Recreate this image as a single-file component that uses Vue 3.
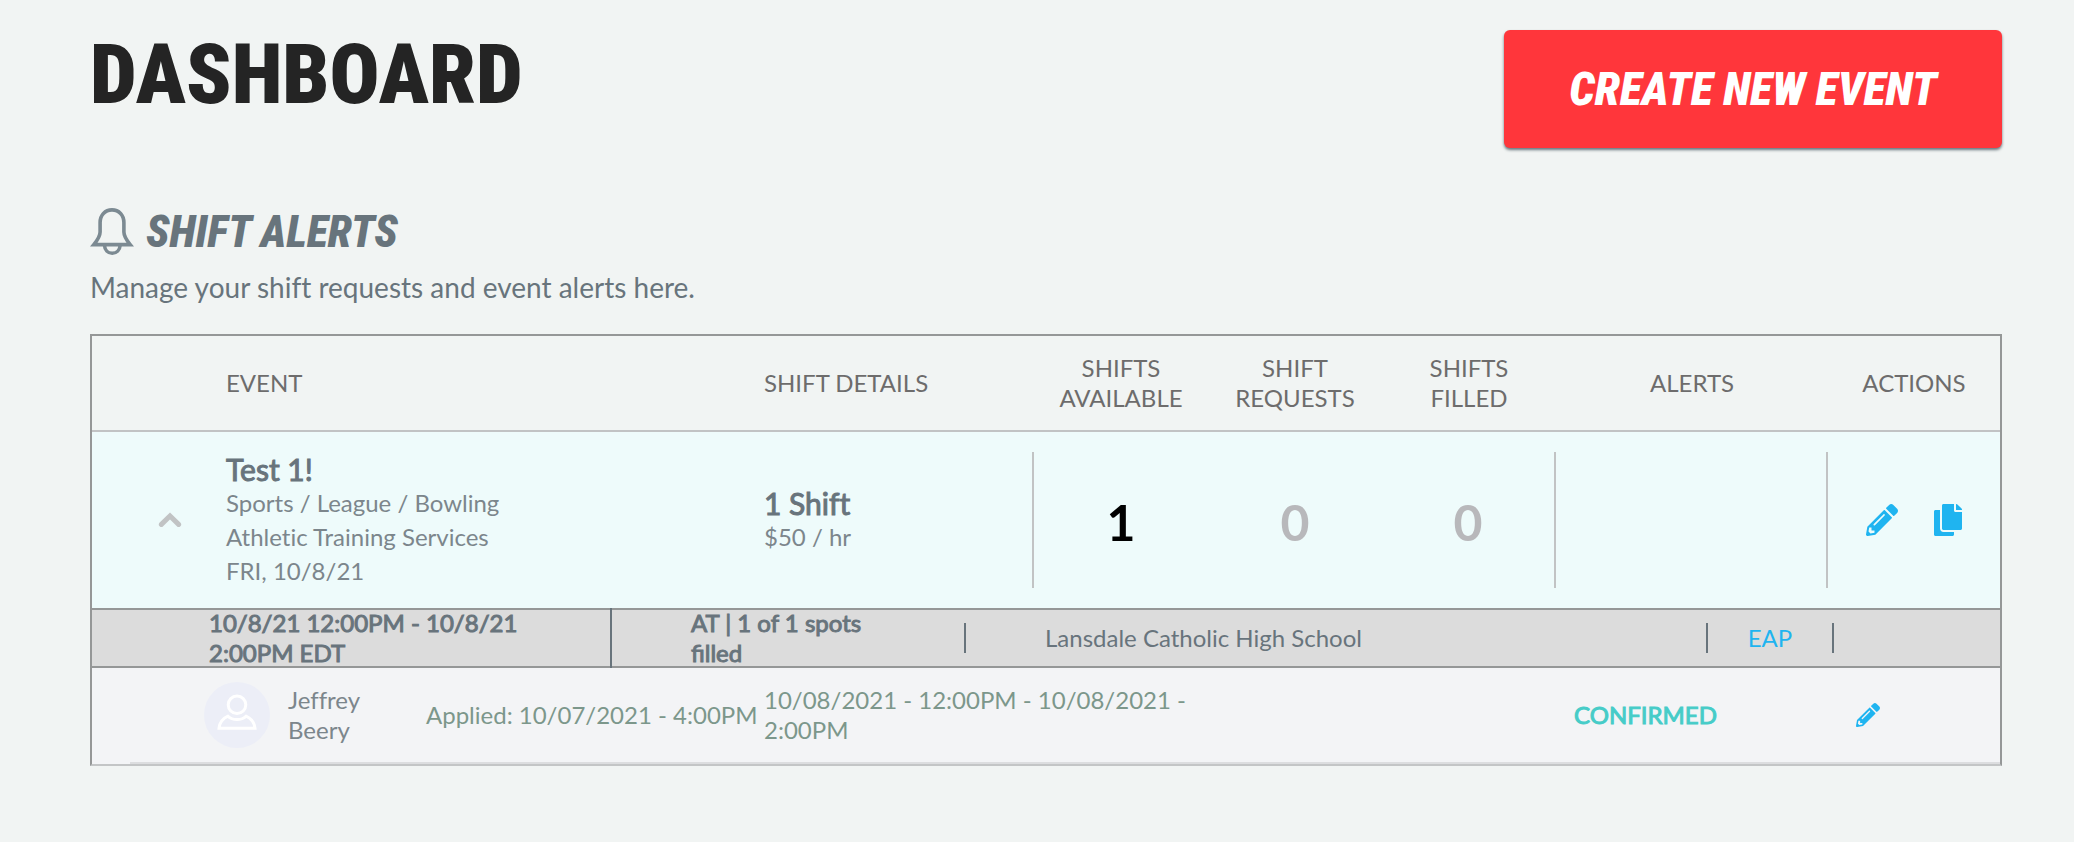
<script setup>
const columns = [
  { label: 'EVENT', align: 'left' },
  { label: 'SHIFT DETAILS', align: 'left' },
  { label: 'SHIFTS AVAILABLE' },
  { label: 'SHIFT REQUESTS' },
  { label: 'SHIFTS FILLED' },
  { label: 'ALERTS' },
  { label: 'ACTIONS' },
]

const event = {
  name: 'Test 1!',
  category: 'Sports / League / Bowling',
  service: 'Athletic Training Services',
  date: 'FRI, 10/8/21',
  shifts: '1 Shift',
  rate: '$50 / hr',
  counts: [1, 0, 0],
}

const shift = {
  time: '10/8/21 12:00PM - 10/8/21 2:00PM EDT',
  spots: 'AT | 1 of 1 spots filled',
  venue: 'Lansdale Catholic High School',
}

const applicants = [
  {
    name: 'Jeffrey Beery',
    applied: 'Applied: 10/07/2021 - 4:00PM',
    range: '10/08/2021 - 12:00PM - 10/08/2021\u00a0- 2:00PM',
    status: 'CONFIRMED',
  },
]

const pencil =
  'M497.9 142.1l-46.1 46.1c-4.7 4.7-12.3 4.7-17 0l-111-111c-4.7-4.7-4.7-12.3 0-17l46.1-46.1c18.7-18.7 49.1-18.7 67.9 0l60.1 60.1c18.8 18.7 18.8 49.1 0 67.9zM284.2 99.8L21.6 362.4.4 483.9c-2.9 16.4 11.4 30.6 27.8 27.8l121.5-21.3 262.6-262.6c4.7-4.7 4.7-12.3 0-17l-111-111c-4.8-4.7-12.4-4.7-17.1 0zM124.1 339.9c-5.5-5.5-5.5-14.3 0-19.8l154-154c5.5-5.5 14.3-5.5 19.8 0s5.5 14.3 0 19.8l-154 154c-5.5 5.5-14.3 5.5-19.8 0zM88 424h48v36.3l-64.5 11.3-31.1-31.1L51.7 376H88v48z'
</script>

<template>
  <main class="page">
    <header class="page-header">
      <h1 class="title">DASHBOARD</h1>
      <button type="button" class="create">CREATE NEW EVENT</button>
    </header>

    <section>
      <div class="section-head">
        <svg class="bell" viewBox="0 0 44 48" fill="none" stroke="#7c8a92" stroke-width="3.6" aria-hidden="true">
          <path d="M3.8 36.6C8 31.5 10.1 28.5 10.1 24V14.5C10.1 7 15 1.9 22 1.9S33.9 7 33.9 14.5V24C33.9 28.5 36 31.5 40.2 36.6Z" />
          <path d="M14.5 37.5C14.8 42 17.8 45.2 22.2 45.2S29.8 42 30.1 37.5" />
        </svg>
        <h2 class="section-title">SHIFT ALERTS</h2>
      </div>
      <p class="intro">Manage your shift requests and event alerts here.</p>

      <div class="panel">
        <table class="events">
          <colgroup>
            <col class="c-toggle" />
            <col />
            <col class="c-details" />
            <col class="c-count" />
            <col class="c-count" />
            <col class="c-count" />
            <col class="c-alerts" />
            <col class="c-actions" />
          </colgroup>
          <thead>
            <tr>
              <td></td>
              <th v-for="c in columns" :key="c.label" scope="col" :class="{ left: c.align === 'left' }">
                <span class="th-label">{{ c.label }}</span>
              </th>
            </tr>
          </thead>
          <tbody>
            <tr class="event-row">
              <td>
                <button type="button" class="icon-btn toggle" aria-label="Collapse event">
                  <svg viewBox="0 0 24 16" width="24" height="16" fill="none" stroke="#c1c3c4" stroke-width="5" stroke-linecap="round">
                    <path d="M3.4 12.4L12 4L20.6 12.4" />
                  </svg>
                </button>
              </td>
              <td>
                <div class="name">{{ event.name }}</div>
                <div class="meta">{{ event.category }}</div>
                <div class="meta">{{ event.service }}</div>
                <div class="meta">{{ event.date }}</div>
              </td>
              <td>
                <div class="cell divided start">
                  <div class="name">{{ event.shifts }}</div>
                  <div class="meta">{{ event.rate }}</div>
                </div>
              </td>
              <td v-for="(n, i) in event.counts" :key="i">
                <div class="cell count" :class="{ zero: n === 0, divided: i === 2 }">{{ n }}</div>
              </td>
              <td><div class="cell divided"></div></td>
              <td>
                <div class="actions">
                  <button type="button" class="icon-btn" aria-label="Edit event">
                    <svg viewBox="0 0 512 512" width="32" height="32" fill="#1fb4f0"><path :d="pencil" /></svg>
                  </button>
                  <button type="button" class="icon-btn" aria-label="Duplicate event">
                    <svg viewBox="0 0 448 512" width="28" height="32" fill="#1fb4f0">
                      <path d="M320 448v40c0 13.255-10.745 24-24 24H24c-13.255 0-24-10.745-24-24V120c0-13.255 10.745-24 24-24h72v296c0 30.879 25.121 56 56 56h168zm0-344V0H152c-13.255 0-24 10.745-24 24v368c0 13.255 10.745 24 24 24h272c13.255 0 24-10.745 24-24V128H344c-13.2 0-24-10.8-24-24zm120.971-31.029L375.029 7.029A24 24 0 0 0 358.059 0H352v96h96v-6.059a24 24 0 0 0-7.029-16.97z" />
                    </svg>
                  </button>
                </div>
              </td>
            </tr>
          </tbody>
        </table>

        <div class="shift-row">
          <div class="shift-time">{{ shift.time }}</div>
          <div class="shift-spots">{{ shift.spots }}</div>
          <div class="shift-venue">{{ shift.venue }}</div>
          <div class="shift-eap"><a href="#eap">EAP</a></div>
        </div>

        <div v-for="a in applicants" :key="a.name" class="applicant">
          <svg class="avatar" viewBox="0 0 66 66" aria-hidden="true">
            <circle cx="33" cy="33" r="33" fill="#eceef7" />
            <g fill="none" stroke="#fff" stroke-width="3">
              <circle cx="33" cy="22.8" r="8.8" />
              <path d="M15 46.2H51C50.2 40 47.5 36.6 42 34.2C37.5 38.6 28.5 38.6 24 34.2C18.5 36.6 15.8 40 15 46.2Z" />
            </g>
          </svg>
          <div class="who">{{ a.name }}</div>
          <div class="green">{{ a.applied }}</div>
          <div class="green range">{{ a.range }}</div>
          <div class="status">{{ a.status }}</div>
          <button type="button" class="icon-btn" aria-label="Edit applicant">
            <svg viewBox="0 0 512 512" width="24" height="24" fill="#1fb4f0"><path :d="pencil" /></svg>
          </button>
        </div>
      </div>
    </section>
  </main>
</template>

<style>
body {
  background: #f1f4f3;
}
</style>

<style scoped>
.page {
  padding: 30px 72px 76px 90px;
  font-family: Lato, "Liberation Sans", sans-serif;
  font-size: 24px;
  line-height: 30px;
  color: #68747c;
  font-variant-ligatures: no-common-ligatures;
}
.page-header {
  display: flex;
  justify-content: space-between;
  align-items: flex-start;
}
h1,
h2,
p {
  margin: 0;
}
.title {
  font-family: "Roboto Condensed", "Liberation Sans Narrow", sans-serif;
  font-size: 83px;
  line-height: 90px;
  font-weight: 900;
  color: #242424;
}
.create {
  height: 118px;
  width: 498px;
  border: 0;
  border-radius: 6px;
  background: #ff363b;
  color: #fff;
  font-family: "Roboto Condensed", "Liberation Sans Narrow", sans-serif;
  font-size: 46px;
  font-weight: 900;
  font-style: italic;
  box-shadow: 0 2px 3px #68747c;
  cursor: pointer;
}
.section-head {
  display: flex;
  align-items: center;
  gap: 12px;
  height: 48px;
  margin-top: 60px;
}
.bell {
  width: 44px;
  height: 48px;
}
.section-title {
  font-family: "Roboto Condensed", "Liberation Sans Narrow", sans-serif;
  font-size: 44px;
  line-height: 46px;
  font-weight: 900;
  font-style: italic;
}
.intro {
  margin: 14px 0 30px;
  font-size: 28px;
  line-height: 34px;
}
.panel {
  border: 2px solid #959797;
  border-bottom-color: #c3c5c6;
}
.events {
  width: 100%;
  table-layout: fixed;
  border-collapse: separate;
  border-spacing: 0;
}
.c-toggle { width: 134px; }
.c-details { width: 270px; }
.c-count { width: 174px; }
.c-alerts { width: 272px; }
.c-actions { width: 172px; }
td,
th {
  padding: 0;
}
thead tr {
  height: 96px;
}
thead td,
th {
  border-bottom: 2px solid #c1c3c4;
}
th {
  font-weight: 400;
  color: #6d6c6c;
}
th.left {
  text-align: left;
}
.th-label {
  display: block;
  padding: 0 20px;
}
.left .th-label {
  padding: 0;
}
.event-row {
  background: #eefbfb;
}
.event-row > td {
  padding: 20px 0;
}
.toggle {
  margin-left: 66px;
}
.icon-btn svg {
  display: block;
}
.name {
  font-size: 30px;
  line-height: 34px;
}
.name,
.shift-time,
.shift-spots,
.status {
  -webkit-text-stroke: 1px currentColor;
}
.meta {
  line-height: 34px;
  color: #7c868c;
}
.cell {
  box-sizing: border-box;
  display: flex;
  align-items: center;
  justify-content: center;
  height: 136px;
}
.cell.start {
  flex-direction: column;
  align-items: flex-start;
}
.divided {
  border-right: 2px solid #c1c3c4;
}
.count {
  padding-top: 4px;
  font-size: 50px;
  font-weight: 700;
  color: #000;
}
.count.zero {
  color: #b8b8bb;
}
.actions {
  display: flex;
  justify-content: center;
  gap: 36px;
}
.icon-btn {
  display: block;
  padding: 0;
  border: 0;
  background: none;
  cursor: pointer;
}
.shift-row {
  box-sizing: border-box;
  height: 60px;
  border: solid #959797;
  border-width: 2px 0;
  background: #dcdcdc;
  display: grid;
  grid-template-columns: 520px 352px 1fr 126px 166px;
  align-items: center;
  align-content: center;
}
.shift-row > div {
  box-sizing: border-box;
  border-right: 2px solid #68747c;
  padding: 0 79px;
}
.shift-row .shift-time {
  padding-left: 117px;
}
.shift-row .shift-spots {
  border-right: 0;
  font-variant-ligatures: normal;
}
.shift-row .shift-venue {
  border-left: 2px solid #68747c;
}
.shift-row .shift-eap {
  padding: 0;
  text-align: center;
}
.shift-eap a {
  color: #1fb4f0;
  text-decoration: none;
}
.applicant {
  display: grid;
  grid-template-columns: 66px 156px 338px 1fr 282px 144px;
  align-items: center;
  padding-left: 112px;
  height: 94px;
  background: linear-gradient(#dcdddf, #dcdddf) 38px 100% / 100% 2px no-repeat #f3f4f6;
  padding-bottom: 2px;
}
.who {
  padding: 0 38px 0 18px;
  color: #7c868c;
}
.green {
  color: #7c978b;
}
.range {
  max-width: 440px;
}
.status {
  color: #46ccc8;
}
.applicant .icon-btn {
  justify-self: start;
}
</style>
